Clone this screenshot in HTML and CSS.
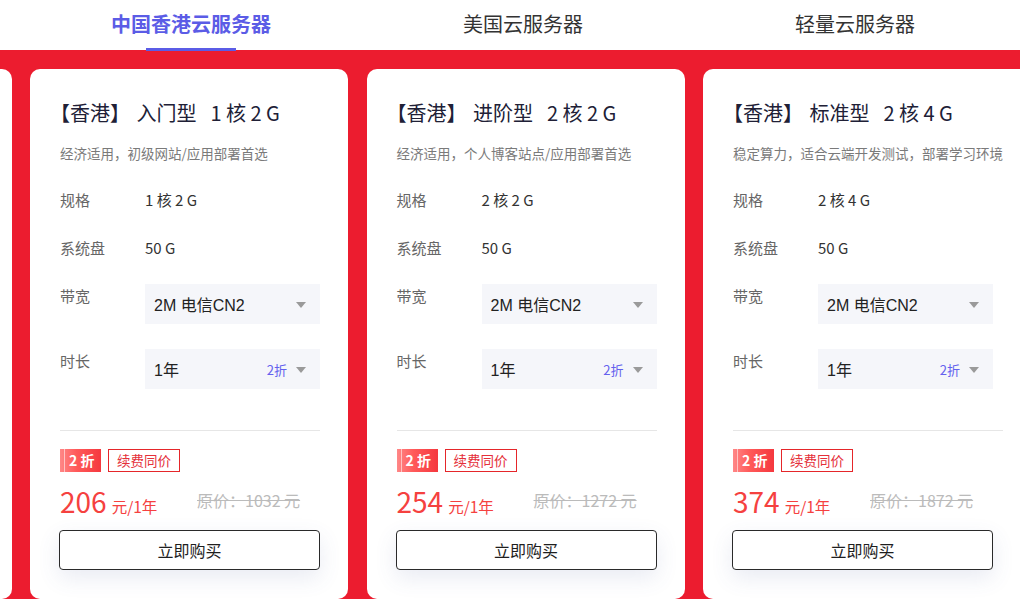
FILE: index.html
```html
<!DOCTYPE html>
<html lang="zh-CN">
<head>
<meta charset="utf-8">
<title>云服务器</title>
<link rel="stylesheet" href="styles.css">
</head>
<body>
<nav class="tabs">
  <div class="tab active">中国香港云服务器</div>
  <div class="tab">美国云服务器</div>
  <div class="tab">轻量云服务器</div>
</nav>
<main class="stage">
  <div class="cards">
    <section class="card ghost"></section>

    <section class="card">
      <h2 class="title"><span class="t-loc">【香港】</span> 入门型<span class="t-spec">1 核 2 G</span></h2>
      <p class="desc">经济适用，初级网站/应用部署首选</p>
      <div class="row"><span class="label">规格</span><span class="value">1 核 2 G</span></div>
      <div class="row"><span class="label">系统盘</span><span class="value">50 G</span></div>
      <div class="row sel-row"><span class="label">带宽</span><div class="select"><span class="sel-text">2M 电信CN2</span><span class="caret"></span></div></div>
      <div class="row sel-row second"><span class="label">时长</span><div class="select"><span class="sel-text">1年</span><span class="disc">2折</span><span class="caret"></span></div></div>
      <hr class="divider">
      <div class="tags"><span class="badge">2 折</span><span class="tag">续费同价</span></div>
      <div class="price-row"><div class="price"><span class="num">206</span><span class="unit">元/1年</span></div><span class="orig">原价：1032 元</span></div>
      <button class="buy">立即购买</button>
    </section>

    <section class="card">
      <h2 class="title"><span class="t-loc">【香港】</span> 进阶型<span class="t-spec">2 核 2 G</span></h2>
      <p class="desc">经济适用，个人博客站点/应用部署首选</p>
      <div class="row"><span class="label">规格</span><span class="value">2 核 2 G</span></div>
      <div class="row"><span class="label">系统盘</span><span class="value">50 G</span></div>
      <div class="row sel-row"><span class="label">带宽</span><div class="select"><span class="sel-text">2M 电信CN2</span><span class="caret"></span></div></div>
      <div class="row sel-row second"><span class="label">时长</span><div class="select"><span class="sel-text">1年</span><span class="disc">2折</span><span class="caret"></span></div></div>
      <hr class="divider">
      <div class="tags"><span class="badge">2 折</span><span class="tag">续费同价</span></div>
      <div class="price-row"><div class="price"><span class="num">254</span><span class="unit">元/1年</span></div><span class="orig">原价：1272 元</span></div>
      <button class="buy">立即购买</button>
    </section>

    <section class="card">
      <h2 class="title"><span class="t-loc">【香港】</span> 标准型<span class="t-spec">2 核 4 G</span></h2>
      <p class="desc">稳定算力，适合云端开发测试，部署学习环境</p>
      <div class="row"><span class="label">规格</span><span class="value">2 核 4 G</span></div>
      <div class="row"><span class="label">系统盘</span><span class="value">50 G</span></div>
      <div class="row sel-row"><span class="label">带宽</span><div class="select"><span class="sel-text">2M 电信CN2</span><span class="caret"></span></div></div>
      <div class="row sel-row second"><span class="label">时长</span><div class="select"><span class="sel-text">1年</span><span class="disc">2折</span><span class="caret"></span></div></div>
      <hr class="divider">
      <div class="tags"><span class="badge">2 折</span><span class="tag">续费同价</span></div>
      <div class="price-row"><div class="price"><span class="num">374</span><span class="unit">元/1年</span></div><span class="orig">原价：1872 元</span></div>
      <button class="buy">立即购买</button>
    </section>
  </div>
</main>
</body>
</html>
```

FILE: styles.css
```css
* { box-sizing: border-box; }
html, body {
  margin: 0;
  padding: 0;
  width: 1020px;
  height: 599px;
  overflow: hidden;
  background: #ffffff;
  font-family: "Noto Sans CJK SC", "Noto Sans", sans-serif;
}

.tabs {
  height: 50px;
  display: grid;
  grid-template-columns: 332px 332px 332px;
  padding-left: 25px;
  background: #fff;
}
.tab {
  position: relative;
  text-align: center;
  font-size: 20px;
  line-height: 48px;
  color: #333333;
}
.tab.active {
  color: #5b5ce6;
  font-weight: 700;
}
.tab.active::after {
  content: "";
  position: absolute;
  left: 121px;
  bottom: -1px;
  width: 90px;
  height: 3px;
  background: #5b5ce6;
  z-index: 2;
}

.stage {
  height: 549px;
  background: #ec1c2f;
  padding-top: 19px;
  overflow: hidden;
}
.cards {
  display: flex;
  gap: 18.5px;
  margin-left: -306.5px;
}
.card {
  flex: 0 0 318px;
  height: 530px;
  background: #ffffff;
  border-radius: 10px;
  padding: 30px 28px 0 30px;
}

.title {
  margin: 0;
  font-size: 20px;
  line-height: 28px;
  font-weight: 400;
  color: #202036;
  white-space: nowrap;
}
.t-loc {
  margin-left: -10px;
  margin-right: 2px;
}
.t-spec {
  margin-left: 14px;
}
.desc {
  margin: 16px 0 0;
  font-size: 13.5px;
  line-height: 20px;
  color: #7a7a7a;
  white-space: nowrap;
}
.row {
  display: flex;
  align-items: flex-start;
  margin-top: 25px;
  line-height: 24px;
  height: 24px;
}
.row + .row { margin-top: 24px; }
.row.sel-row { height: 40px; }
.row.sel-row.second { margin-top: 25px; }
.label {
  width: 85px;
  flex: 0 0 85px;
  font-size: 15px;
  color: #666666;
}
.value {
  font-size: 15px;
  color: #333333;
}
.select {
  width: 175px;
  height: 40px;
  background: #f5f6fa;
  display: flex;
  align-items: center;
  padding: 2px 14px 0 9px;
}
.sel-text {
  flex: 1;
  font-family: "Liberation Sans", "Noto Sans CJK SC", sans-serif;
  font-size: 16px;
  color: #222222;
  padding-top: 2px;
}
.disc {
  font-size: 13px;
  color: #6461ee;
  margin-right: 9px;
}
.caret {
  width: 0;
  height: 0;
  border-left: 5px solid transparent;
  border-right: 5px solid transparent;
  border-top: 6px solid #9a9a9a;
}

.divider {
  margin: 41px 0 0;
  border: 0;
  height: 1px;
  background: #e6e6e6;
}

.tags {
  display: flex;
  gap: 7px;
  margin-top: 18px;
  height: 23px;
}
.badge {
  position: relative;
  width: 41px;
  height: 23px;
  background: linear-gradient(90deg, #ff8787 0%, #ff5a5a 40%, #f5383e 100%);
  color: #ffffff;
  font-weight: 700;
  font-size: 14px;
  line-height: 23px;
  padding-left: 9px;
}
.badge::before {
  content: "";
  position: absolute;
  left: 4px;
  top: 0;
  width: 1px;
  height: 23px;
  background: rgba(255, 255, 255, 0.55);
}
.tag {
  width: 72px;
  height: 23px;
  border: 1px solid #e5262a;
  color: #e5303a;
  font-size: 13.5px;
  line-height: 21px;
  text-align: center;
}

.price-row {
  display: flex;
  align-items: flex-start;
  margin-top: 13px;
  height: 32px;
}
.price {
  width: 137px;
  display: flex;
  align-items: baseline;
  color: #f5413f;
  white-space: nowrap;
}
.num {
  font-size: 28px;
  line-height: 32px;
  font-weight: 400;
}
.unit {
  font-size: 15.5px;
  margin-left: 5px;
}
.orig {
  margin-top: 3px;
  font-size: 16px;
  line-height: 24px;
  color: #bbbbbb;
  text-decoration: line-through;
  white-space: nowrap;
}

.buy {
  display: block;
  margin-top: 13px;
  margin-left: -1px;
  width: 261px;
  height: 40px;
  background: #ffffff;
  border: 1px solid #2a2a2a;
  border-radius: 4px;
  font-family: "Noto Sans CJK SC", sans-serif;
  font-size: 16px;
  color: #1e1e1e;
  box-shadow: 0 8px 22px rgba(70, 90, 160, 0.12);
}
```
